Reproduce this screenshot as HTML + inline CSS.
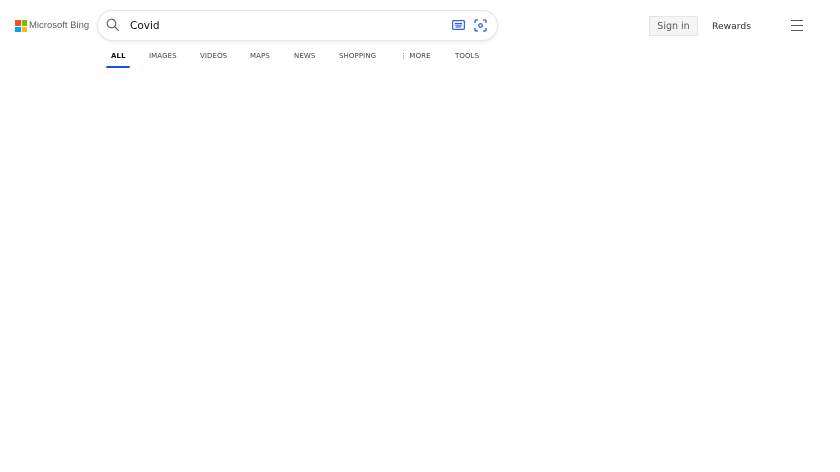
<!DOCTYPE html>
<html><head><style>
body{margin:0;width:840px;height:472px;background:#fff;font-family:"DejaVu Sans","Liberation Sans",sans-serif;position:relative;overflow:hidden}
.a{position:absolute}
.nav{position:absolute;top:52px;font-size:7px;color:#444;letter-spacing:.1px}
</style></head><body>
<div class="a" style="left:15px;top:20px;width:12px;height:12px">
<div class="a" style="left:0;top:0;width:5.5px;height:5.5px;background:#f25022"></div>
<div class="a" style="left:6.5px;top:0;width:5.5px;height:5.5px;background:#7fba00"></div>
<div class="a" style="left:0;top:6.5px;width:5.5px;height:5.5px;background:#00a4ef"></div>
<div class="a" style="left:6.5px;top:6.5px;width:5.5px;height:5.5px;background:#ffb900"></div>
</div>
<div class="a" style="left:29px;top:19.5px;font-family:'Liberation Sans',sans-serif;font-size:9.5px;color:#5e5e5e">Microsoft Bing</div>
<div class="a" style="left:98px;top:11px;width:399px;height:29px;border-radius:15px;background:#fff;box-shadow:0 0 0 1px #e6e6e6,0 1px 5px rgba(0,0,0,.12)"></div>
<svg class="a" style="left:106px;top:18px" width="14" height="14" viewBox="0 0 14 14"><circle cx="5.5" cy="5.5" r="4.3" fill="none" stroke="#666" stroke-width="1.2"/><line x1="8.6" y1="8.6" x2="12.8" y2="12.8" stroke="#666" stroke-width="1.2"/></svg>
<div class="a" style="left:130px;top:20px;font-size:10.5px;color:#111">Covid</div>
<svg class="a" style="left:452px;top:20px" width="13" height="10" viewBox="0 0 13 10"><rect x=".6" y=".6" width="11.8" height="8.8" rx="1" fill="#e8eefc" stroke="#2a5ce6" stroke-width="1.1"/><path d="M3 3.5h7M3 5.2h7M4 7h5" stroke="#2a5ce6" stroke-width=".9"/></svg>
<svg class="a" style="left:474px;top:19px" width="13" height="13" viewBox="0 0 13 13"><path d="M1 4V2a1 1 0 0 1 1-1h2M9 1h2a1 1 0 0 1 1 1v2M12 9v2a1 1 0 0 1-1 1H9M4 12H2a1 1 0 0 1-1-1V9" fill="none" stroke="#2a5ce6" stroke-width="1.3"/><circle cx="6.5" cy="6.5" r="1.8" fill="none" stroke="#2a5ce6" stroke-width="1.2"/></svg>
<div class="nav" style="left:111px;font-weight:bold;color:#111">ALL</div>
<div class="a" style="left:106px;top:66px;width:24px;height:2px;background:#1a53e8;border-radius:1px"></div>
<div class="nav" style="left:149px">IMAGES</div>
<div class="nav" style="left:200px">VIDEOS</div>
<div class="nav" style="left:250px">MAPS</div>
<div class="nav" style="left:294px">NEWS</div>
<div class="nav" style="left:339px">SHOPPING</div>
<div class="nav" style="left:400px">⋮ MORE</div>
<div class="nav" style="left:455px">TOOLS</div>
<div class="a" style="left:649px;top:16px;width:47px;height:18px;background:#f5f5f5;border:1px solid #e5e5e5;font-size:9.5px;color:#555;text-align:center;line-height:19px">Sign in</div>
<div class="a" style="left:712px;top:21px;font-size:9.2px;color:#333">Rewards</div>
<div class="a" style="left:791px;top:20px;width:12px;height:1.3px;background:#555"></div>
<div class="a" style="left:791px;top:25px;width:12px;height:1.3px;background:#555"></div>
<div class="a" style="left:791px;top:30px;width:12px;height:1.3px;background:#555"></div>
</body></html>
